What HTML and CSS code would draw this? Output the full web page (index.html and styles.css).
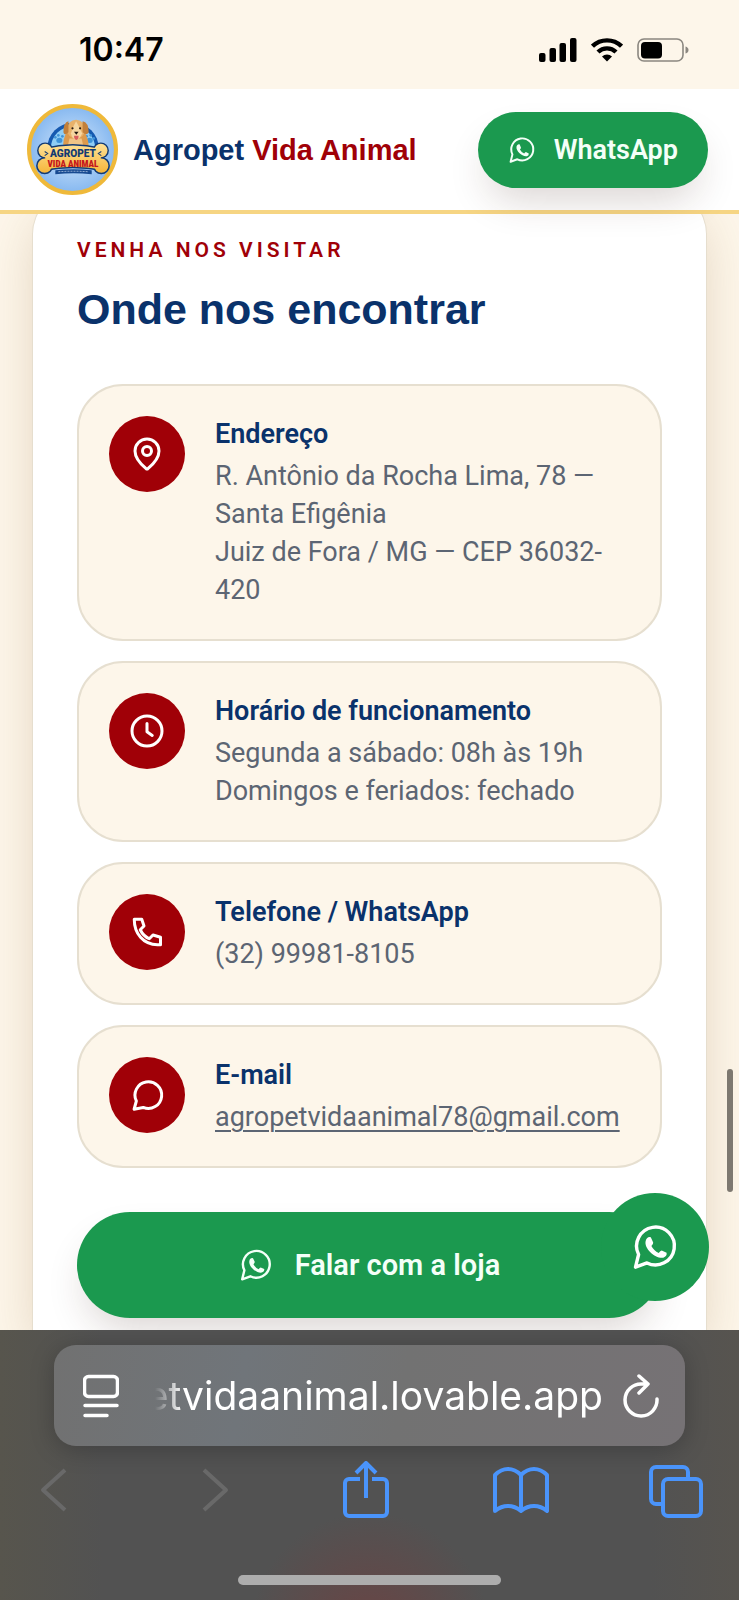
FILE: index.html
```html
<!DOCTYPE html>
<html lang="pt-BR">
<head>
<meta charset="utf-8">
<meta name="viewport" content="width=device-width, initial-scale=1">
<title>Agropet Vida Animal</title>
<link rel="stylesheet" href="styles.css">
</head>
<body>
<svg class="sprite" aria-hidden="true">
  <symbol id="whatsapp" viewBox="0 0 48 48">
    <path d="M4.500 44.200 7.600 31.500A18.900 18.900 0 1 1 16 39.900Z" fill="none" stroke="currentColor" stroke-width="3.400" stroke-linejoin="round"/>
    <path d="M16 15.300q1.800-1.800 3.800-1l2.400 5.200q.3 1.400-1.800 3.600 2.400 4.700 7.300 6.900 1.700-2.600 3-2.600l4.900 2.400q.6 3.600-3.300 4.900C25 36.200 13 26 14.600 18.200q.4-1.900 1.400-2.900Z" fill="currentColor"/>
  </symbol>
</svg>

<div class="statusbar">
  <time class="clock">10:47</time>
  <div class="indicators">
    <svg width="38" height="24" viewBox="0 0 38 24"><rect x="0" y="15" width="6.500" height="9" rx="2"/><rect x="10.500" y="10" width="6.500" height="14" rx="2"/><rect x="20.500" y="5" width="6.500" height="19" rx="2"/><rect x="31" y="0" width="6.500" height="24" rx="2"/></svg>
    <svg width="32" height="24" viewBox="0 0 32 24"><path d="M1.500 8.200a21 21 0 0 1 29 0M7 14a13 13 0 0 1 18 0" fill="none" stroke="#000" stroke-width="4.400"/><path d="m16 23.500-5-5a7.200 7.200 0 0 1 10 0Z"/></svg>
    <svg width="52" height="24" viewBox="0 0 52 24"><rect x="1" y="1" width="45" height="22" rx="6" fill="none" stroke="#8b8780" stroke-width="1.600"/><rect x="4" y="4" width="21" height="16.500" rx="4"/><path d="M48.500 8.500v7q3-1 3-3.500t-3-3.500Z" fill="#8b8780"/></svg>
  </div>
</div>

<header class="header">
  <svg class="logo" viewBox="0 0 90 90" role="img" aria-label="Logo Agropet Vida Animal">
    <defs>
      <radialGradient id="sky"><stop offset="0" stop-color="#d5e8fb"/><stop offset="1" stop-color="#86b8f0"/></radialGradient>
      <linearGradient id="bone" gradientUnits="userSpaceOnUse" x1="0" y1="38" x2="0" y2="69"><stop offset="0" stop-color="#ffe39a"/><stop offset="1" stop-color="#f5b438"/></linearGradient>
    </defs>
    <circle cx="45" cy="45" r="43" fill="url(#sky)" stroke="#efb93a" stroke-width="4"/>
    <path d="M20 44a25.500 25.500 0 0 1 51 0Z" fill="#1559b0"/>
    <path d="M23.500 44a22 22 0 0 1 44 0Z" fill="#8fcdf5"/>
    <g fill="#3f93d8"><ellipse cx="32" cy="36" rx="3" ry="2.500"/><circle cx="28" cy="33" r="1.300"/><circle cx="31" cy="31" r="1.300"/><circle cx="35" cy="32" r="1.300"/><ellipse cx="62" cy="36" rx="3" ry="2.500"/><circle cx="59" cy="32" r="1.300"/><circle cx="63" cy="31" r="1.300"/><circle cx="66" cy="34" r="1.300"/></g>
    <path d="M39 28q-4 8-3 15h25q0-8-4-15Z" fill="#dc9a4d"/>
    <path d="M42 34h12l2 9H40Z" fill="#f0c486"/>
    <ellipse cx="48.500" cy="25" rx="9" ry="9.500" fill="#e8b16a"/>
    <path d="M41 17q-5 1-5 11 1 4 5 0ZM55 17q6 1 6 11-2 4-6 0Z" fill="#c27f3a"/>
    <path d="M48.500 17q-3 5-5 12 1 6 5 6t6-6q-3-7-6-12Z" fill="#f6d6a0"/>
    <circle cx="45" cy="24" r="1.100" fill="#2b1a10"/><circle cx="52.500" cy="24" r="1.100" fill="#2b1a10"/>
    <path d="M46.500 27.500h4.500l-2.200 3Z" fill="#20140d"/><path d="M46.500 31.500h4.500q0 4-2.200 4t-2.300-4Z" fill="#d95d5d"/>
    <g fill="#123a73"><circle cx="18" cy="46" r="8"/><circle cx="17.500" cy="61" r="8.500"/><circle cx="73" cy="46" r="8"/><circle cx="73.500" cy="61" r="8.500"/><path d="M18 43q27-7 55 0v23q-28-5-55 0Z"/></g>
    <g fill="url(#bone)"><circle cx="18" cy="46" r="6.600"/><circle cx="17.500" cy="61" r="7"/><circle cx="73" cy="46" r="6.600"/><circle cx="73.500" cy="61" r="7"/><path d="M18 44.500q27-7 55 0v20q-28-5-55 0Z"/></g>
    <path d="m17.500 47 3 2-3 2M73.500 47l-3 2 3 2" fill="none" stroke="#123a73"/>
    <text x="45.500" y="52" class="logo-top">AGROPET</text>
    <text x="45.500" y="62" class="logo-bottom">VIDA ANIMAL</text>
    <path d="M28 65.500q18-2 36 0v4q-18-2-36 0Z" fill="#174a91"/>
    <path d="M31 67q15-1 30 0" stroke="#8aa8cf" stroke-dasharray="2 1" fill="none"/>
  </svg>
  <a class="brand" href="#">Agropet <span>Vida Animal</span></a>
  <a class="pill pill-small" href="#whatsapp"><svg class="wa"><use href="#whatsapp"/></svg>WhatsApp</a>
</header>

<main class="main">
  <section class="card">
    <p class="eyebrow">VENHA NOS VISITAR</p>
    <h1 class="title">Onde nos encontrar</h1>
    <ul class="items">
      <li class="item">
        <span class="badge"><svg viewBox="0 0 24 24"><path d="M20 10c0 5-5.500 10.200-7.400 11.800a1 1 0 0 1-1.200 0C9.500 20.200 4 15 4 10a8 8 0 0 1 16 0"/><circle cx="12" cy="10" r="3"/></svg></span>
        <div><h2>Endereço</h2><p>R. Antônio da Rocha Lima, 78 — Santa Efigênia<br>Juiz de Fora / MG — CEP 36032-420</p></div>
      </li>
      <li class="item">
        <span class="badge"><svg viewBox="0 0 24 24"><circle cx="12" cy="12" r="10"/><path d="M12 7v5.500l3.500 2.500"/></svg></span>
        <div><h2>Horário de funcionamento</h2><p>Segunda a sábado: 08h às 19h<br>Domingos e feriados: fechado</p></div>
      </li>
      <li class="item">
        <span class="badge"><svg viewBox="0 0 24 24"><path d="M3.500 3.500h5l1.500 4.500-2.500 2.500q2 4.200 6 6l2.500-2.500 5 1.500v5h-2C9.500 20.500 3.500 13 3.500 3.500Z"/></svg></span>
        <div><h2>Telefone / WhatsApp</h2><p>(32) 99981-8105</p></div>
      </li>
      <li class="item">
        <span class="badge"><svg viewBox="0 0 24 24"><path d="M3.400 21.500 4.900 16a8.900 8.900 0 1 1 4.600 4.300Z"/></svg></span>
        <div><h2>E-mail</h2><p><a href="mailto:agropetvidaanimal78@gmail.com">agropetvidaanimal78@gmail.com</a></p></div>
      </li>
    </ul>
    <a class="pill pill-large" href="#whatsapp"><svg class="wa"><use href="#whatsapp"/></svg>Falar com a loja</a>
  </section>
  <a class="fab" href="#whatsapp" aria-label="WhatsApp"><svg class="wa"><use href="#whatsapp"/></svg></a>
  <span class="scroll-thumb"></span>
</main>

<footer class="browser">
  <div class="address">
    <button type="button" aria-label="Menu da página"><svg width="36" height="44" viewBox="0 0 36 44"><rect x="1.500" y="2.500" width="33" height="20" rx="4"/><path d="M2 31.500h32M2 41.500h22"/></svg></button>
    <button type="button" class="url">etvidaanimal.lovable.app</button>
    <button type="button" aria-label="Recarregar"><svg width="36" height="44" viewBox="0 0 36 44"><path d="M25 10h-6A16 16 0 1 0 34 25M16 2l9 8-9 9"/></svg></button>
  </div>
  <nav class="toolbar">
    <button type="button" class="off" aria-label="Voltar" disabled><svg viewBox="0 0 56 58"><path d="M39 9 17 29l22 20"/></svg></button>
    <button type="button" class="off" aria-label="Avançar" disabled><svg viewBox="0 0 56 58"><path d="m22 9 22 20-22 20"/></svg></button>
    <button type="button" aria-label="Compartilhar"><svg viewBox="0 0 56 58"><path d="M23 18H12a4 4 0 0 0-4 4v29a4 4 0 0 0 4 4h34a4 4 0 0 0 4-4V22a4 4 0 0 0-4-4H35M29 37V2M19 12 29 2l10 10"/></svg></button>
    <button type="button" aria-label="Favoritos"><svg viewBox="0 0 56 58"><path d="M28 14q-6-6-13-6T2 14v36q6-5 13-5t13 5q6-5 13-5t13 5V14q-6-6-13-6t-13 6Zm0 0v36"/></svg></button>
    <button type="button" aria-label="Abas"><svg viewBox="0 0 56 58"><rect x="15" y="18" width="38" height="37" rx="5"/><path d="M15 43H8a5 5 0 0 1-5-5V11a5 5 0 0 1 5-5h27a5 5 0 0 1 5 5v7"/></svg></button>
  </nav>
  <span class="home"></span>
</footer>
</body>
</html>
```

FILE: styles.css
```css
* { box-sizing: border-box; }

body {
  margin: 0;
  min-height: 100vh;
  display: flex;
  flex-direction: column;
  background: #fdf6ea;
  font-family: Roboto, "Noto Sans", sans-serif;
}

h1, h2, p, ul { margin: 0; padding: 0; }
a { color: inherit; text-decoration: none; }
button { border: 0; padding: 0; background: none; color: inherit; font: inherit; }
svg { display: block; flex: none; }
.sprite { position: absolute; width: 0; height: 0; }

.statusbar {
  display: flex;
  align-items: center;
  justify-content: space-between;
  height: 89px;
  padding: 10px 50px 0 79px;
}
.clock { font: 600 32px/40px Inter, sans-serif; }
.indicators { display: flex; gap: 14px; }

.header {
  position: relative;
  z-index: 1;
  display: flex;
  align-items: center;
  height: 125px;
  padding: 0 31px 0 27px;
  background: #fff;
  border-bottom: 4px solid #f6d583;
}
.logo { width: 91px; height: 91px; }
.logo text { text-anchor: middle; font-weight: 900; }
.logo .logo-top { font-family: Roboto, sans-serif; font-size: 10px; fill: #123a73; }
.logo .logo-bottom { font-family: "Liberation Sans Narrow", "Roboto Condensed", Roboto, sans-serif; font-size: 9px; fill: #c4161c; }
.brand {
  flex: 1;
  margin-left: 15px;
  color: #0a326b;
  font: 700 29px/40px "Liberation Sans", sans-serif;
}
.brand span { color: #a00007; }

.pill {
  display: flex;
  align-items: center;
  justify-content: center;
  border-radius: 60px;
  background: #1b994f;
  color: #f4fff8;
  font-weight: 600;
  box-shadow: 0 20px 40px -10px rgba(60, 30, 20, 0.2);
}
.pill-small { height: 76px; padding: 0 30px; gap: 18px; font-size: 27px; }
.pill-small .wa { width: 28px; height: 28px; }
.pill-large { height: 106px; margin-top: 44px; gap: 22px; font-size: 29px; }
.pill-large .wa { width: 34px; height: 34px; }

.main { position: relative; flex: 1; display: flex; overflow: hidden; }
.card {
  flex: 1;
  margin: -24px 32px 0;
  padding: 44px 44px 12px;
  border: 1px solid #e6dece;
  border-bottom: 0;
  border-radius: 44px 44px 0 0;
  background: #fff;
  box-shadow: 0 20px 50px -4px rgba(130, 90, 30, 0.22);
}
.eyebrow {
  color: #a00007;
  font-size: 21px;
  font-weight: 600;
  line-height: 30px;
  letter-spacing: 4px;
}
.title {
  margin: 16px 0 47px;
  color: #0a326b;
  font: 700 43px/56px "Liberation Sans", sans-serif;
}
.items { display: grid; gap: 20px; list-style: none; }
.item {
  display: flex;
  gap: 30px;
  padding: 30px;
  border: 2px solid #e6dfd0;
  border-radius: 46px;
  background: #fdf6ea;
}
.item > div { flex: 1; min-width: 0; }
.item h2 { margin-bottom: 4px; color: #0a326b; font-size: 27px; font-weight: 600; line-height: 37px; }
.item p { color: #5c6573; font-size: 27px; line-height: 38px; }
.item a { text-decoration: underline; text-decoration-thickness: 2px; text-underline-offset: 4px; }
.badge {
  display: grid;
  place-items: center;
  flex: none;
  width: 76px;
  height: 76px;
  border-radius: 50%;
  background: #a00007;
}
.badge svg {
  width: 36px;
  height: 36px;
  fill: none;
  stroke: #fff;
  stroke-width: 2;
  stroke-linecap: round;
  stroke-linejoin: round;
}

.fab {
  position: absolute;
  right: 30px;
  bottom: 29px;
  display: grid;
  place-items: center;
  width: 108px;
  height: 108px;
  border-radius: 50%;
  background: #1b994f;
  color: #fff;
}
.fab .wa { width: 48px; height: 48px; }
.scroll-thumb {
  position: absolute;
  right: 6px;
  bottom: 138px;
  width: 6px;
  height: 123px;
  border-radius: 3px;
  background: #7d7870;
}

.browser {
  padding: 15px 0;
  background:
    radial-gradient(circle at 50% 112%, #6a4444 0, transparent 120px),
    linear-gradient(90deg, #57554d 0, #525252 14%, #525252 88%, #57544f 100%);
}
.address {
  display: flex;
  align-items: center;
  gap: 20px;
  height: 101px;
  margin: 0 54px;
  padding: 0 26px 0 29px;
  border-radius: 22px;
  background: linear-gradient(100deg, #717171, #70757a 30%, #727272 55%, #767275);
  color: #fff;
  box-shadow: 0 4px 24px rgba(0, 0, 0, 0.22);
}
.address svg { fill: none; stroke: #fff; stroke-width: 3.5; stroke-linecap: round; stroke-linejoin: round; }
.url {
  flex: 1;
  min-width: 0;
  font: 400 39px/56px Inter, sans-serif;
  text-align: right;
  white-space: nowrap;
  -webkit-mask-image: linear-gradient(90deg, transparent 16px, #000 44px);
  mask-image: linear-gradient(90deg, transparent 16px, #000 44px);
}
.toolbar { display: flex; justify-content: space-between; padding: 15px 35px 0 26px; }
.toolbar svg {
  width: 56px;
  height: 58px;
  fill: none;
  stroke: #4a94fb;
  stroke-width: 4;
  stroke-linejoin: round;
}
.toolbar .off svg { stroke: #696969; }
.home {
  display: block;
  width: 263px;
  height: 10px;
  margin: 56px auto 0;
  border-radius: 5px;
  background: #adadad;
}
```
